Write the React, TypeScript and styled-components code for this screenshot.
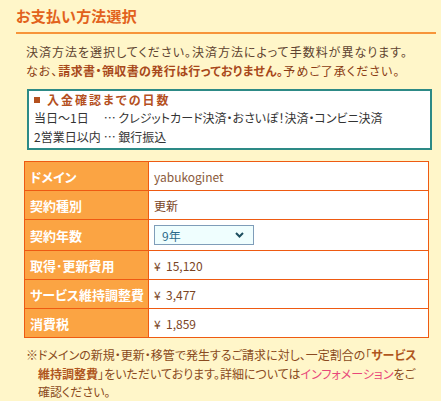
import React from "react";
import styled, { createGlobalStyle } from "styled-components";

const GlobalStyle = createGlobalStyle`
  html, body {
    margin: 0;
    padding: 0;
    background: #fff6c9;
  }
  body {
    font-family: "Noto Sans CJK JP", "Noto Sans", sans-serif;
    font-feature-settings: "palt";
    font-size: 12px;
    color: #5c3c24;
  }
`;

const Page = styled.div`
  padding: 6px 5px 10px 16px;
`;

const Title = styled.h2`
  margin: 0;
  font-size: 15px;
  font-weight: bold;
  line-height: 20px;
  letter-spacing: 0.2px;
  color: #e2621c;
  padding-bottom: 6px;
  border-bottom: 2px solid #f7953a;
`;

const Intro = styled.div`
  margin: 8px 0 0 10px;
  line-height: 19px;
  font-size: 12px;
  letter-spacing: 1px;
`;

const IntroLine = styled.div<{ $tone?: "dark" | "warm" }>`
  color: ${(p) => (p.$tone === "warm" ? "#8a3c14" : "#5e4330")};
  white-space: nowrap;
`;

const Strong = styled.strong`
  font-weight: bold;
  color: #a8481a;
  letter-spacing: 0.4px;
`;

const InfoBox = styled.div`
  margin: 9px 0 0 11px;
  width: 396px;
  background: #ffffff;
  border: 2px solid #2d8a86;
  padding: 0 0 2px 5px;
`;

const InfoHead = styled.div`
  display: flex;
  align-items: center;
  gap: 7px;
  font-weight: bold;
  font-size: 12px;
  line-height: 17px;
  letter-spacing: 2px;
  color: #b4501e;
`;

const Square = styled.span`
  width: 6px;
  height: 6px;
  background: #b4501e;
`;

const InfoGrid = styled.div`
  display: grid;
  grid-template-columns: max-content 1fr;
  column-gap: 3px;
  line-height: 19px;
  color: #333333;
  font-size: 12px;
  letter-spacing: 0;
`;

const Table = styled.table`
  margin: 11px 0 0 8px;
  width: 405px;
  border-collapse: collapse;
  border: 1px solid #ee5a12;
`;

const Row = styled.tr<{ $h?: number }>`
  height: ${(p) => p.$h ?? 29}px;
`;

const Label = styled.th`
  width: 118px;
  background: #fba443;
  color: #ffffff;
  text-align: left;
  font-weight: bold;
  font-size: 13px;
  padding: 0 0 0 5px;
  border: 1px solid #ee5a12;
  white-space: nowrap;
`;

const Value = styled.td<{ $muted?: boolean }>`
  background: #ffffff;
  padding: 0 0 0 5px;
  border: 1px solid #ee5a12;
  color: ${(p) => (p.$muted ? "#8a5a3c" : "#7a4424")};
  font-size: 12px;
  white-space: nowrap;
`;

const SelectWrap = styled.div`
  position: relative;
  width: 100px;
  height: 20px;
`;

const Select = styled.select`
  appearance: none;
  width: 100px;
  height: 20px;
  box-sizing: border-box;
  background: #effefe;
  border: 1px solid #7f9db9;
  color: #2b6a8a;
  font-family: inherit;
  font-size: 12px;
  padding: 0 0 0 7px;
  margin: 0;
  outline: none;
`;

const Chevron = styled.svg`
  position: absolute;
  right: 10px;
  top: 7px;
  pointer-events: none;
`;

const Note = styled.div`
  margin: 8px 0 0 10px;
  display: flex;
  line-height: 18.5px;
  color: #8a4a20;
  font-size: 12px;
`;

const NoteMark = styled.span`
  flex: 0 0 11px;
`;

const NoteBody = styled.div`
  white-space: nowrap;
  letter-spacing: 0;
`;

const NoteStrong = styled.strong`
  font-weight: bold;
  color: #b0561e;
`;

const Link = styled.a`
  color: #e8477a;
  text-decoration: none;
`;

const rows: { label: string; value: string; muted?: boolean }[] = [
  { label: "ドメイン", value: "yabukoginet", muted: true },
  { label: "契約種別", value: "更新" },
];

const fees: { label: string; value: string }[] = [
  { label: "取得･更新費用", value: "¥\u00a0\u00a015,120" },
  { label: "サービス維持調整費", value: "¥\u00a0\u00a03,477" },
  { label: "消費税", value: "¥\u00a0\u00a01,859" },
];

export default function App() {
  return (
    <>
      <GlobalStyle />
      <Page>
        <Title>お支払い方法選択</Title>
        <Intro>
          <IntroLine>決済方法を選択してください。決済方法によって手数料が異なります。</IntroLine>
          <IntroLine $tone="warm">
            なお、<Strong>請求書・領収書の発行は行っておりません。</Strong>予めご了承ください。
          </IntroLine>
        </Intro>
        <InfoBox>
          <InfoHead>
            <Square />
            入金確認までの日数
          </InfoHead>
          <InfoGrid>
            <span>当日～1日</span>
            <span>… クレジットカード決済・おさいぽ！決済・コンビニ決済</span>
            <span>2営業日以内</span>
            <span>… 銀行振込</span>
          </InfoGrid>
        </InfoBox>
        <Table>
          <tbody>
            {rows.map((r) => (
              <Row key={r.label}>
                <Label>{r.label}</Label>
                <Value $muted={r.muted}>{r.value}</Value>
              </Row>
            ))}
            <Row $h={31}>
              <Label>契約年数</Label>
              <Value>
                <SelectWrap>
                  <Select defaultValue="9">
                    <option value="9">9年</option>
                  </Select>
                  <Chevron width="9" height="6" viewBox="0 0 9 6">
                    <path d="M1 1 L4.5 4.5 L8 1" stroke="#1f4f60" strokeWidth="2" fill="none" />
                  </Chevron>
                </SelectWrap>
              </Value>
            </Row>
            {fees.map((r) => (
              <Row key={r.label}>
                <Label>{r.label}</Label>
                <Value>{r.value}</Value>
              </Row>
            ))}
          </tbody>
        </Table>
        <Note>
          <NoteMark>※</NoteMark>
          <NoteBody>
            ドメインの新規・更新・移管で発生するご請求に対し、一定割合の「<NoteStrong>サービス</NoteStrong>
            <br />
            <NoteStrong>維持調整費</NoteStrong>」をいただいております。詳細については<Link href="#">インフォメーション</Link>をご
            <br />
            確認ください。
          </NoteBody>
        </Note>
      </Page>
    </>
  );
}
